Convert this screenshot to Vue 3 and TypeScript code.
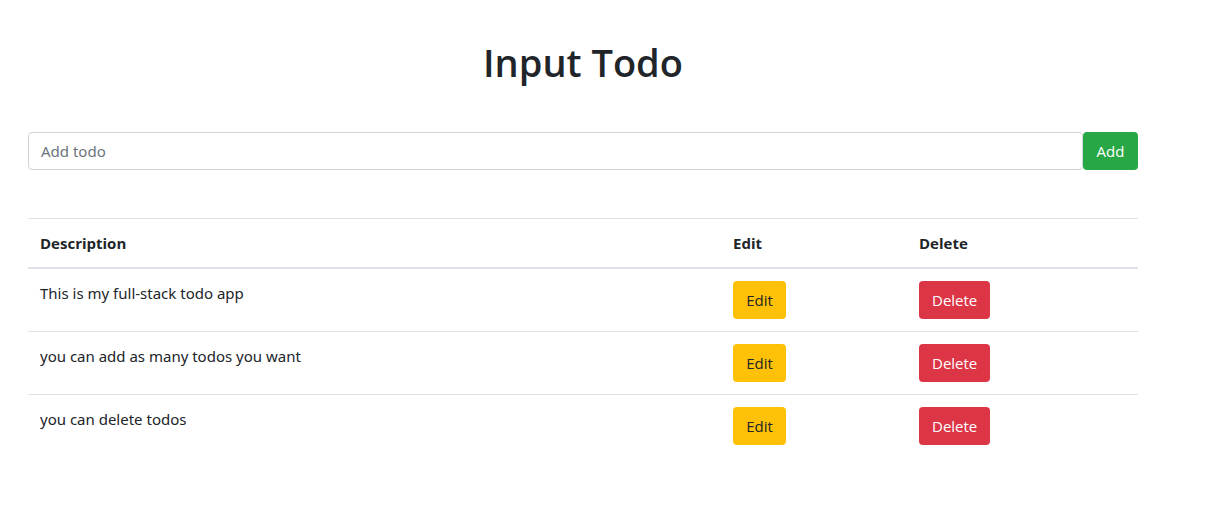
<script setup lang="ts">
import { ref } from 'vue'

interface Todo {
  id: number
  description: string
}

const draft = ref<string>('')
const todos = ref<Todo[]>([
  { id: 1, description: 'This is my full-stack todo app' },
  { id: 2, description: 'you can add as many todos you want' },
  { id: 3, description: 'you can delete todos' },
])

function addTodo(): void {
  const description = draft.value.trim()
  if (!description) return
  todos.value.push({ id: Date.now(), description })
  draft.value = ''
}

function editTodo(todo: Todo): void {
  draft.value = todo.description
  deleteTodo(todo.id)
}

function deleteTodo(id: number): void {
  todos.value = todos.value.filter((todo) => todo.id !== id)
}
</script>

<template>
  <main class="container">
    <h1 class="title">Input Todo</h1>

    <form class="todo-form" @submit.prevent="addTodo">
      <input
        v-model="draft"
        class="form-control"
        type="text"
        placeholder="Add todo"
        aria-label="Add todo"
      />
      <button class="btn btn-success" type="submit">Add</button>
    </form>

    <table class="table">
      <thead>
        <tr>
          <th class="col-description" scope="col">Description</th>
          <th class="col-edit" scope="col">Edit</th>
          <th class="col-delete" scope="col">Delete</th>
        </tr>
      </thead>
      <tbody>
        <tr v-for="todo in todos" :key="todo.id">
          <td class="description">{{ todo.description }}</td>
          <td>
            <button class="btn btn-warning" type="button" @click="editTodo(todo)">Edit</button>
          </td>
          <td>
            <button class="btn btn-danger" type="button" @click="deleteTodo(todo.id)">Delete</button>
          </td>
        </tr>
      </tbody>
    </table>
  </main>
</template>

<style>
body {
  margin: 0;
  background: #fff;
}
</style>

<style scoped>
.container,
.container * {
  box-sizing: border-box;
}

.container {
  margin: 0 80px 0 28px;
  padding-top: 38px;
  font-family: "Segoe UI", "Open Sans", "Noto Sans", sans-serif;
  font-size: 15px;
  line-height: 24px;
  color: #212529;
}

.title {
  margin: 0;
  font-size: 38px;
  font-weight: 600;
  line-height: 48px;
  text-align: center;
}

.todo-form {
  display: flex;
  margin-top: 46px;
}

.form-control {
  flex: 1;
  min-width: 0;
  height: 38px;
  padding: 6px 12px;
  border: 1px solid #ced4da;
  border-radius: 4px;
  background: #fff;
  color: #495057;
  font: inherit;
}

.form-control,
.description {
  font-family: "Segoe UI", "Noto Sans", "Open Sans", sans-serif;
}

.form-control::placeholder {
  color: #6c757d;
  opacity: 1;
}

.btn {
  min-width: 53px;
  padding: 6px 12px;
  border: 1px solid transparent;
  border-radius: 4px;
  font: inherit;
  text-align: center;
  cursor: pointer;
}

.btn-success {
  min-width: 55px;
  background: #28a745;
  color: #fff;
}

.btn-warning {
  background: #ffc107;
  color: #212529;
}

.btn-danger {
  background: #dc3545;
  color: #fff;
}

.table {
  width: 100%;
  margin-top: 48px;
  border-collapse: collapse;
  table-layout: fixed;
}

.table th,
.table td {
  padding: 12px;
  border-top: 1px solid #dee2e6;
  text-align: left;
  vertical-align: top;
}

.table thead th {
  border-bottom: 2px solid #dee2e6;
  font-weight: 700;
}

.table .btn {
  display: block;
}

.col-edit {
  width: 186px;
}

.col-delete {
  width: 231px;
}
</style>
